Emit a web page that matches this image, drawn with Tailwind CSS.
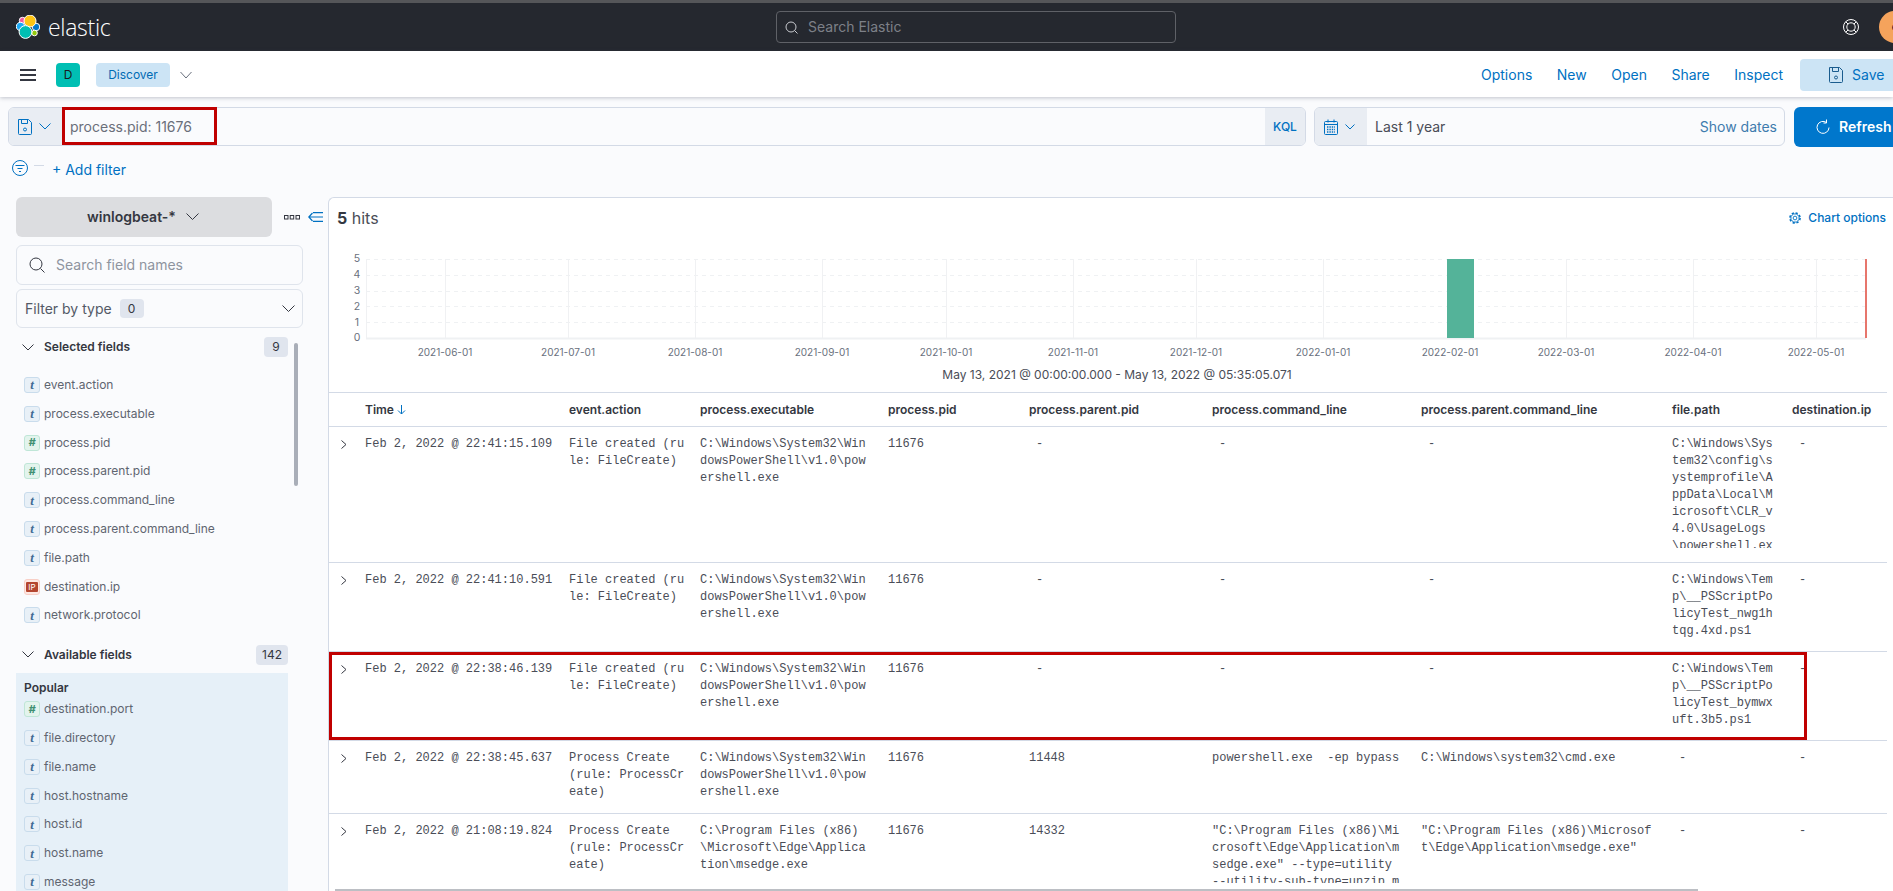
<!DOCTYPE html>
<html lang="en">
<head>
<meta charset="utf-8">
<title>Discover - Elastic</title>
<script src="https://cdn.jsdelivr.net/npm/@tailwindcss/browser@4"></script>
</head>
<body class="w-[1893px] h-[891px] overflow-hidden bg-[#fafbfd] font-[Inter,sans-serif] text-[#343741]">

<!-- top bar -->
<div class="h-[51px] bg-[#25282f] border-t-[3px] border-[#555659] flex items-center overflow-hidden">
  <div class="w-[776px] shrink-0 flex items-center pl-4 gap-2">
    <svg width="24" height="24" viewBox="16 15 24 24" class="shrink-0">
      <circle cx="22.5" cy="20.5" r="3.2" fill="#ef5ba1" stroke="#fff"/>
      <circle cx="20.5" cy="26.5" r="4.2" fill="#1ba9f5" stroke="#fff"/>
      <circle cx="36" cy="27" r="3.8" fill="#0077cc" stroke="#fff"/>
      <circle cx="34.5" cy="33" r="2.8" fill="#93c90e" stroke="#fff"/>
      <circle cx="30" cy="21" r="6" fill="#fec514" stroke="#fff"/>
      <circle cx="25.5" cy="32" r="6.4" fill="#00bfb3" stroke="#fff"/>
    </svg>
    <span class="text-[23px] font-light leading-none text-white tracking-[-0.3px] font-['Open_Sans',sans-serif]">elastic</span>
  </div>
  <div class="w-[400px] h-8 shrink-0 rounded border border-[#5f6167] flex items-center pl-2 gap-[10px]">
    <svg width="13" height="13" viewBox="0 0 13 13" fill="none" stroke="#c9cbd0" stroke-width="1"><circle cx="6" cy="6" r="5"/><path d="M9.5 9.5l3 3"/></svg>
    <span class="text-sm text-[#7d8088]">Search Elastic</span>
  </div>
  <div class="flex items-center gap-5 ml-[667px] shrink-0">
    <svg width="16" height="16" viewBox="0 0 16 16" fill="none" stroke="#fff" stroke-width="1"><circle cx="8" cy="8" r="7.5"/><circle cx="8" cy="8" r="4.2"/><path d="M2.7 2.7l2.3 2.3M13.3 2.7L11 5M2.7 13.3L5 11M13.3 13.3L11 11"/></svg>
    <div class="w-8 h-8 rounded-full bg-[#f5a35c] shrink-0 flex items-center justify-center text-xs text-[#25282f]">e</div>
  </div>
</div>

<!-- app header -->
<div class="h-[46px] pt-[2px] bg-white shadow-[0_1px_4px_rgba(60,70,90,0.3)] flex items-center pl-5 relative">
  <svg width="16" height="12" viewBox="0 0 16 12" fill="#343741" class="shrink-0"><rect width="16" height="2"/><rect y="5" width="16" height="2"/><rect y="10" width="16" height="2"/></svg>
  <div class="w-6 h-6 ml-5 rounded bg-[#00bfb3] text-xs flex items-center justify-center text-[#1a1c21]">D</div>
  <div class="w-[74px] h-6 ml-4 rounded bg-[#cce4f5] text-xs flex items-center justify-center text-[#006bb4]">Discover</div>
  <svg width="12" height="8" viewBox="0 0 12 8" fill="none" stroke="#69707d" class="ml-[10px]"><path d="M0.5 1l5.5 6 5.5-6"/></svg>
  <div class="ml-auto flex items-center gap-[24.5px] text-sm text-[#0071c2]">
    <span>Options</span><span>New</span><span>Open</span><span>Share</span><span>Inspect</span>
    <div class="w-[110px] h-8 -mr-[17px] -ml-[7.5px] rounded bg-[#cce4f5] flex items-center pl-[29px] gap-[9px] shrink-0">
      <svg width="14" height="16" viewBox="0 0 14 16" fill="none" stroke="#1a5c8e"><path d="M.5.5h10l3 3v11a1 1 0 0 1-1 1h-11a1 1 0 0 1-1-1z"/><path d="M3.5.5v4h6v-4"/><circle cx="7" cy="10.5" r="1.5"/></svg>
      <span class="text-[#0071c2]">Save</span>
    </div>
  </div>
</div>

<!-- query bar -->
<div class="flex pt-[10px] pl-2 gap-2 relative w-[1893px]">
  <div class="w-[1298px] h-[39px] shrink-0 rounded-md border border-[#d3dae6] flex overflow-hidden relative">
    <div class="w-[53px] shrink-0 bg-[#e9edf3] flex items-center pl-[9px] gap-[7px]">
      <svg width="14" height="16" viewBox="0 0 14 16" fill="none" stroke="#0071c2"><path d="M.5.5h10l3 3v11a1 1 0 0 1-1 1h-11a1 1 0 0 1-1-1z"/><path d="M3.5.5v4h6v-4"/><circle cx="7" cy="10.5" r="1.5"/></svg>
      <svg width="12" height="7" viewBox="0 0 12 7" fill="none" stroke="#0071c2"><path d="M.5.5L6 6l5.5-5.5"/></svg>
    </div>
    <div class="flex-1 flex items-center pl-2 text-sm text-[#6a6f7a]">process.pid: 11676</div>
    <div class="w-10 shrink-0 bg-[#e9edf3] flex items-center justify-center text-xs font-medium text-[#0071c2]">KQL</div>
  </div>
  <div class="w-[471px] h-[39px] shrink-0 rounded-md border border-[#d3dae6] flex overflow-hidden">
    <div class="w-[52px] shrink-0 bg-[#e9edf3] flex items-center pl-[9px] gap-[7px]">
      <svg width="14" height="16" viewBox="0 0 14 16" fill="none" stroke="#0071c2"><rect x=".5" y="2.5" width="13" height="13" rx="1"/><path d="M.5 5.5h13M4 .5v3M10 .5v3"/><path d="M3 8h8M3 10.5h8M3 13h8" stroke-dasharray="1.4 1" stroke-width="1.4"/></svg>
      <svg width="10" height="6" viewBox="0 0 10 6" fill="none" stroke="#0071c2"><path d="M.5.5L5 5 9.500.5"/></svg>
    </div>
    <div class="flex-1 flex items-center justify-between pl-2 pr-[7px] text-sm">
      <span class="text-[#4a4d57]">Last 1 year</span>
      <span class="text-[#3f7cae]">Show dates</span>
    </div>
  </div>
  <div class="w-[120px] h-[40px] shrink-0 ml-px rounded-md bg-[#0077cc] flex items-center pl-[22px] gap-[9px] text-white text-sm font-semibold">
    <svg width="14" height="16" viewBox="0 0 14 16" fill="none" stroke="#fff"><path d="M10.500 3.500A6 6 0 1 0 13 8.500"/><path d="M10.500 .5v3.500h-3"/></svg>
    <span>Refresh</span>
  </div>
  <div class="absolute left-[62px] top-[10px] w-[155px] h-[38px] border-[3px] border-[#c00000]"></div>
</div>

<!-- filter row -->
<div class="h-[50px] flex items-start pt-[12px] pl-3">
  <svg width="16" height="18" viewBox="0 0 16 18" fill="none" stroke="#0071c2"><circle cx="8" cy="9" r="7.500"/><path d="M3.500 6.500h9M5.500 9.500h5M7 12.500h2"/></svg>
  <div class="w-[10px] h-px bg-[#d3dae6] ml-[6px] mt-[6px]"></div>
  <span class="ml-[8px] mt-[2px] text-sm font-normal text-[#0071c2] leading-[17px]">+ Add filter</span>
</div>

<!-- content -->
<div class="flex h-[694px]">
  <!-- sidebar -->
  <aside class="w-[328px] shrink-0 pl-4 relative">
    <div class="flex items-center">
      <div class="w-[256px] h-10 rounded-md bg-[#dcdde0] flex items-center justify-center gap-[10px] pr-[2px] text-sm font-semibold text-[#343741]">
        <span>winlogbeat-*</span>
        <svg width="13" height="8" viewBox="0 0 13 8" fill="none" stroke="#343741"><path d="M.5.5l6 6 6-6"/></svg>
      </div>
      <svg width="16" height="5" viewBox="0 0 16 5" fill="none" stroke="#343741" class="ml-3"><rect x=".5" y=".5" width="3.500" height="3.500"/><rect x="6.200" y=".5" width="3.500" height="3.500"/><rect x="12" y=".5" width="3.500" height="3.500"/></svg>
      <svg width="15" height="10" viewBox="0 0 15 10" fill="none" stroke="#0071c2" stroke-width="1.200" class="ml-2"><path d="M5 .6h10M.8 5H15M5 9.400h10M4.500 1L.8 5l3.700 4"/></svg>
    </div>
    <div class="w-[287px] h-[40px] mt-2 rounded-md border border-[#dfe4ec] bg-[#fafbfd] flex items-center pl-3 gap-[11px]">
      <svg width="16" height="16" viewBox="0 0 16 16" fill="none" stroke="#343741"><circle cx="7" cy="7" r="6"/><path d="M11.500 11.500l4 4"/></svg>
      <span class="text-sm text-[#8e949f]">Search field names</span>
    </div>
    <div class="w-[287px] h-[39px] mt-[4px] rounded-md border border-[#dfe4ec] flex items-center pl-2 pr-[7px]">
      <span class="text-sm text-[#535966]">Filter by type</span>
      <span class="w-6 h-[19px] ml-2 rounded bg-[#e0e5ee] text-xs flex items-center justify-center">0</span>
      <svg width="13" height="8" viewBox="0 0 13 8" fill="none" stroke="#343741" class="ml-auto"><path d="M.5.5l6 6 6-6"/></svg>
    </div>

    <div class="w-[272px] h-5 mt-[9px] flex items-center pl-[6px]">
      <svg width="12" height="7" viewBox="0 0 12 7" fill="none" stroke="#343741"><path d="M.5.5L6 6l5.5-5.5"/></svg>
      <span class="ml-[10px] text-xs font-semibold">Selected fields</span>
      <span class="w-6 h-5 ml-auto rounded bg-[#e0e5ee] text-xs flex items-center justify-center">9</span>
    </div>
    <ul class="w-[272px] mt-[13.600px] pl-2 text-xs text-[#5f6570]">
      <li class="h-[28.800px] flex items-center gap-1"><span class="w-4 h-4 rounded-[3px] border border-[#c9dcec] bg-[#e8f0f7] text-[#3f6a94] font-bold italic font-['Liberation_Serif',serif] text-[13px] leading-none flex items-center justify-center">t</span>event.action</li>
      <li class="h-[28.800px] flex items-center gap-1"><span class="w-4 h-4 rounded-[3px] border border-[#c9dcec] bg-[#e8f0f7] text-[#3f6a94] font-bold italic font-['Liberation_Serif',serif] text-[13px] leading-none flex items-center justify-center">t</span>process.executable</li>
      <li class="h-[28.800px] flex items-center gap-1"><span class="w-4 h-4 rounded-[3px] border border-[#bfe6d7] bg-[#e3f4ed] text-[#3f8f72] font-bold italic text-[11px] leading-none flex items-center justify-center">#</span>process.pid</li>
      <li class="h-[28.800px] flex items-center gap-1"><span class="w-4 h-4 rounded-[3px] border border-[#bfe6d7] bg-[#e3f4ed] text-[#3f8f72] font-bold italic text-[11px] leading-none flex items-center justify-center">#</span>process.parent.pid</li>
      <li class="h-[28.800px] flex items-center gap-1"><span class="w-4 h-4 rounded-[3px] border border-[#c9dcec] bg-[#e8f0f7] text-[#3f6a94] font-bold italic font-['Liberation_Serif',serif] text-[13px] leading-none flex items-center justify-center">t</span>process.command_line</li>
      <li class="h-[28.800px] flex items-center gap-1"><span class="w-4 h-4 rounded-[3px] border border-[#c9dcec] bg-[#e8f0f7] text-[#3f6a94] font-bold italic font-['Liberation_Serif',serif] text-[13px] leading-none flex items-center justify-center">t</span>process.parent.command_line</li>
      <li class="h-[28.800px] flex items-center gap-1"><span class="w-4 h-4 rounded-[3px] border border-[#c9dcec] bg-[#e8f0f7] text-[#3f6a94] font-bold italic font-['Liberation_Serif',serif] text-[13px] leading-none flex items-center justify-center">t</span>file.path</li>
      <li class="h-[28.800px] flex items-center gap-1"><span class="w-4 h-4 rounded-[3px] border border-[#f8cfc6] bg-[#fde8e3] flex items-center justify-center"><span class="w-3 h-[10px] rounded-[1px] bg-[#b4452f] text-white text-[8px] leading-none flex items-center justify-center">IP</span></span>destination.ip</li>
      <li class="h-[28.800px] flex items-center gap-1"><span class="w-4 h-4 rounded-[3px] border border-[#c9dcec] bg-[#e8f0f7] text-[#3f6a94] font-bold italic font-['Liberation_Serif',serif] text-[13px] leading-none flex items-center justify-center">t</span>network.protocol</li>
    </ul>
    <div class="w-[272px] h-5 mt-[15px] flex items-center pl-[6px]">
      <svg width="12" height="7" viewBox="0 0 12 7" fill="none" stroke="#343741"><path d="M.5.5L6 6l5.5-5.5"/></svg>
      <span class="ml-[10px] text-xs font-semibold">Available fields</span>
      <span class="w-8 h-5 ml-auto rounded bg-[#e0e5ee] text-xs flex items-center justify-center">142</span>
    </div>
    <div class="w-[272px] mt-2 pt-2 pl-2 bg-[#e6f0f8] text-xs text-[#5f6570] h-[219px]">
      <div class="h-[14px] leading-[14px] font-semibold text-[#343741]">Popular</div>
      <ul>
        <li class="h-[28.800px] flex items-center gap-1"><span class="w-4 h-4 rounded-[3px] border border-[#bfe6d7] bg-[#e3f4ed] text-[#3f8f72] font-bold italic text-[11px] leading-none flex items-center justify-center">#</span>destination.port</li>
        <li class="h-[28.800px] flex items-center gap-1"><span class="w-4 h-4 rounded-[3px] border border-[#c9dcec] bg-[#e8f0f7] text-[#3f6a94] font-bold italic font-['Liberation_Serif',serif] text-[13px] leading-none flex items-center justify-center">t</span>file.directory</li>
        <li class="h-[28.800px] flex items-center gap-1"><span class="w-4 h-4 rounded-[3px] border border-[#c9dcec] bg-[#e8f0f7] text-[#3f6a94] font-bold italic font-['Liberation_Serif',serif] text-[13px] leading-none flex items-center justify-center">t</span>file.name</li>
        <li class="h-[28.800px] flex items-center gap-1"><span class="w-4 h-4 rounded-[3px] border border-[#c9dcec] bg-[#e8f0f7] text-[#3f6a94] font-bold italic font-['Liberation_Serif',serif] text-[13px] leading-none flex items-center justify-center">t</span>host.hostname</li>
        <li class="h-[28.800px] flex items-center gap-1"><span class="w-4 h-4 rounded-[3px] border border-[#c9dcec] bg-[#e8f0f7] text-[#3f6a94] font-bold italic font-['Liberation_Serif',serif] text-[13px] leading-none flex items-center justify-center">t</span>host.id</li>
        <li class="h-[28.800px] flex items-center gap-1"><span class="w-4 h-4 rounded-[3px] border border-[#c9dcec] bg-[#e8f0f7] text-[#3f6a94] font-bold italic font-['Liberation_Serif',serif] text-[13px] leading-none flex items-center justify-center">t</span>host.name</li>
        <li class="h-[28.800px] flex items-center gap-1"><span class="w-4 h-4 rounded-[3px] border border-[#c9dcec] bg-[#e8f0f7] text-[#3f6a94] font-bold italic font-['Liberation_Serif',serif] text-[13px] leading-none flex items-center justify-center">t</span>message</li>
      </ul>
    </div>
    <div class="absolute left-[294px] top-[146px] w-1 h-[143px] rounded bg-[#a9aeb8]"></div>
  </aside>

  <!-- main -->
  <main class="w-[1565px] shrink-0 bg-white border-t border-l border-[#d3dae6] rounded-tl-md relative overflow-hidden">
    <div class="h-[42px] pb-[2px] flex items-center pl-2 pr-[7px]">
      <span class="text-base text-[#4a4d57]"><b class="font-bold text-[#343741]">5</b> hits</span>
      <svg width="12" height="12" viewBox="0 0 16 16" fill="none" stroke="#0071c2" class="ml-auto"><circle cx="8" cy="8" r="2.500" stroke-width="1.200"/><circle cx="8" cy="8" r="5.500" stroke-width="1.200"/><circle cx="8" cy="8" r="6.800" stroke-width="2" stroke-dasharray="3 2.340"/></svg>
      <span class="ml-[7px] text-xs font-medium text-[#0071c2]">Chart options</span>
    </div>

    <svg width="1565" height="152" viewBox="329 240 1565 152" class="block font-[Inter,sans-serif]">
      <g stroke="#eff1f3" stroke-width="1" stroke-dasharray="4 4">
        <path d="M366 259.500H1866M366 275.500H1866M366 291.500H1866M366 306.500H1866M366 322.500H1866"/>
      </g>
      <g stroke="#f0f1f3" stroke-width="1">
        <path d="M366.500 259V338M445.500 259V338M568.500 259V338M695.500 259V338M822.500 259V338M946.500 259V338M1073.500 259V338M1196.500 259V338M1323.500 259V338M1566.500 259V338M1693.500 259V338M1816.500 259V338"/>
      </g>
      <path d="M366 338.500H1866" stroke="#eff1f3" stroke-width="2"/>
      <rect x="1447" y="259" width="27" height="79" fill="#54b399"/>
      <rect x="1865" y="259" width="2" height="79" fill="#e7766c"/>
      <g fill="#69707d" font-size="10.500" text-anchor="middle">
        <text x="357" y="262">5</text><text x="357" y="278">4</text><text x="357" y="294">3</text><text x="357" y="310">2</text><text x="357" y="326">1</text><text x="357" y="341">0</text>
      </g>
      <g fill="#69707d" font-size="10" text-anchor="middle">
        <text x="445" y="356">2021-06-01</text><text x="568" y="356">2021-07-01</text><text x="695" y="356">2021-08-01</text><text x="822" y="356">2021-09-01</text><text x="946" y="356">2021-10-01</text><text x="1073" y="356">2021-11-01</text><text x="1196" y="356">2021-12-01</text><text x="1323" y="356">2022-01-01</text><text x="1450" y="356">2022-02-01</text><text x="1566" y="356">2022-03-01</text><text x="1693" y="356">2022-04-01</text><text x="1816" y="356">2022-05-01</text>
      </g>
      <text x="1117" y="379" text-anchor="middle" font-size="12" fill="#4a4d57">May 13, 2021 @ 00:00:00.000 - May 13, 2022 @ 05:35:05.071</text>
    </svg>

    <!-- table -->
    <div class="relative mr-[6px]">
      <div class="h-[35px] border-y border-[#d3dae6] grid grid-cols-[36px_204px_131px_188px_141px_183px_209px_251px_120px_95px] items-center text-xs font-semibold text-[#343741]">
        <span></span>
        <span class="flex items-center gap-[3px]">Time <svg width="9" height="10" viewBox="0 0 9 10" fill="none" stroke="#0071c2"><path d="M4.500 0v9M1 5.500l3.500 3.500L8 5.500"/></svg></span>
        <span>event.action</span><span>process.executable</span><span>process.pid</span><span>process.parent.pid</span><span>process.command_line</span><span>process.parent.command_line</span><span>file.path</span><span>destination.ip</span>
      </div>

      <div class="h-[136px] border-b border-[#d3dae6] grid grid-cols-[36px_204px_131px_188px_141px_183px_209px_251px_120px_95px] pt-[9px] font-['Liberation_Mono',monospace] text-xs leading-[17px] text-[#4a4d57] whitespace-pre">
        <span class="pl-[12px] pt-[4px]"><svg width="6" height="9" viewBox="0 0 6 9" fill="none" stroke="#343741"><path d="M.5.500L5 4.500.5 8.500"/></svg></span>
        <span>Feb 2, 2022 @ 22:41:15.109</span>
        <span>File created (ru<br>le: FileCreate)</span>
        <span>C:\Windows\System32\Win<br>dowsPowerShell\v1.0\pow<br>ershell.exe</span>
        <span>11676</span>
        <span class="pl-[7px]">-</span>
        <span class="pl-[7px]">-</span>
        <span class="pl-[7px]">-</span>
        <span class="h-[112px] overflow-hidden">C:\Windows\Sys<br>tem32\config\s<br>ystemprofile\A<br>ppData\Local\M<br>icrosoft\CLR_v<br>4.0\UsageLogs<br>\powershell.ex</span>
        <span class="pl-[7px]">-</span>
      </div>

      <div class="h-[89px] border-b border-[#d3dae6] grid grid-cols-[36px_204px_131px_188px_141px_183px_209px_251px_120px_95px] pt-[9px] font-['Liberation_Mono',monospace] text-xs leading-[17px] text-[#4a4d57] whitespace-pre">
        <span class="pl-[12px] pt-[4px]"><svg width="6" height="9" viewBox="0 0 6 9" fill="none" stroke="#343741"><path d="M.5.500L5 4.500.5 8.500"/></svg></span>
        <span>Feb 2, 2022 @ 22:41:10.591</span>
        <span>File created (ru<br>le: FileCreate)</span>
        <span>C:\Windows\System32\Win<br>dowsPowerShell\v1.0\pow<br>ershell.exe</span>
        <span>11676</span>
        <span class="pl-[7px]">-</span>
        <span class="pl-[7px]">-</span>
        <span class="pl-[7px]">-</span>
        <span>C:\Windows\Tem<br>p\__PSScriptPo<br>licyTest_nwg1h<br>tqg.4xd.ps1</span>
        <span class="pl-[7px]">-</span>
      </div>

      <div class="h-[89px] border-b border-[#d3dae6] grid grid-cols-[36px_204px_131px_188px_141px_183px_209px_251px_120px_95px] pt-[9px] font-['Liberation_Mono',monospace] text-xs leading-[17px] text-[#4a4d57] whitespace-pre">
        <span class="pl-[12px] pt-[4px]"><svg width="6" height="9" viewBox="0 0 6 9" fill="none" stroke="#343741"><path d="M.5.500L5 4.500.5 8.500"/></svg></span>
        <span>Feb 2, 2022 @ 22:38:46.139</span>
        <span>File created (ru<br>le: FileCreate)</span>
        <span>C:\Windows\System32\Win<br>dowsPowerShell\v1.0\pow<br>ershell.exe</span>
        <span>11676</span>
        <span class="pl-[7px]">-</span>
        <span class="pl-[7px]">-</span>
        <span class="pl-[7px]">-</span>
        <span>C:\Windows\Tem<br>p\__PSScriptPo<br>licyTest_bymwx<br>uft.3b5.ps1</span>
        <span class="pl-[7px]">-</span>
      </div>

      <div class="h-[73px] border-b border-[#d3dae6] grid grid-cols-[36px_204px_131px_188px_141px_183px_209px_251px_120px_95px] pt-[9px] font-['Liberation_Mono',monospace] text-xs leading-[17px] text-[#4a4d57] whitespace-pre">
        <span class="pl-[12px] pt-[4px]"><svg width="6" height="9" viewBox="0 0 6 9" fill="none" stroke="#343741"><path d="M.5.500L5 4.500.5 8.500"/></svg></span>
        <span>Feb 2, 2022 @ 22:38:45.637</span>
        <span>Process Create<br>(rule: ProcessCr<br>eate)</span>
        <span>C:\Windows\System32\Win<br>dowsPowerShell\v1.0\pow<br>ershell.exe</span>
        <span>11676</span>
        <span>11448</span>
        <span>powershell.exe  -ep bypass</span>
        <span>C:\Windows\system32\cmd.exe</span>
        <span class="pl-[7px]">-</span>
        <span class="pl-[7px]">-</span>
      </div>

      <div class="h-[77px] grid grid-cols-[36px_204px_131px_188px_141px_183px_209px_251px_120px_95px] pt-[9px] font-['Liberation_Mono',monospace] text-xs leading-[17px] text-[#4a4d57] whitespace-pre">
        <span class="pl-[12px] pt-[4px]"><svg width="6" height="9" viewBox="0 0 6 9" fill="none" stroke="#343741"><path d="M.5.500L5 4.500.5 8.500"/></svg></span>
        <span>Feb 2, 2022 @ 21:08:19.824</span>
        <span>Process Create<br>(rule: ProcessCr<br>eate)</span>
        <span>C:\Program Files (x86)<br>\Microsoft\Edge\Applica<br>tion\msedge.exe</span>
        <span>11676</span>
        <span>14332</span>
        <span class="h-[60px] overflow-hidden">"C:\Program Files (x86)\Mi<br>crosoft\Edge\Application\m<br>sedge.exe" --type=utility<br>--utility-sub-type=unzip.m</span>
        <span>"C:\Program Files (x86)\Microsof<br>t\Edge\Application\msedge.exe"</span>
        <span class="pl-[7px]">-</span>
        <span class="pl-[7px]">-</span>
      </div>

      <!-- highlighted row annotation -->
      <div class="absolute left-0 top-[260px] w-[1478px] h-[88px] border-[3px] border-[#c00000]"></div>
      <!-- scroll track -->
      <div class="absolute left-[6px] bottom-0 w-[1363px] h-[2px] bg-[#bcbfc4]"></div>
    </div>
  </main>
</div>
</body>
</html>
